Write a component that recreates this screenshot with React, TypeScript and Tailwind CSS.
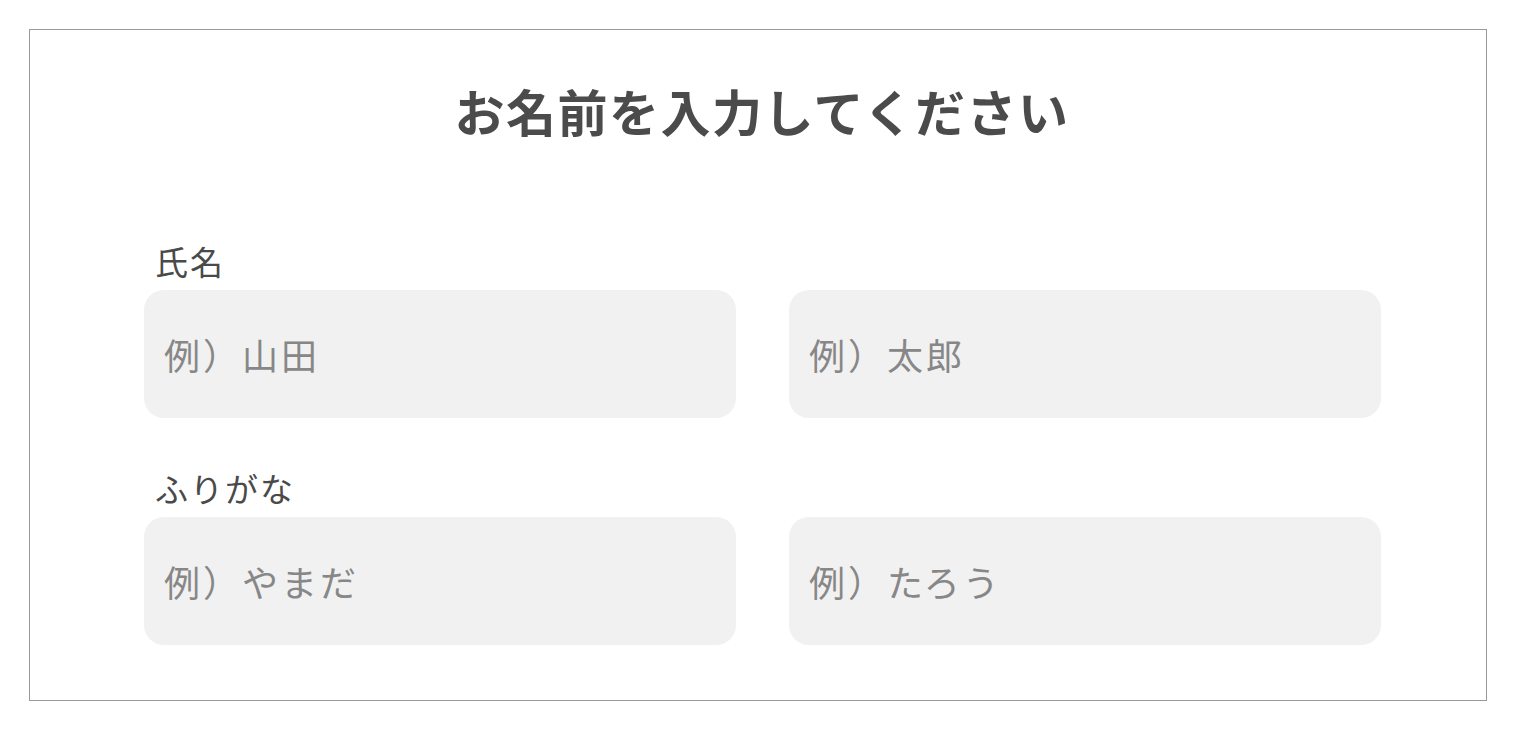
import React from "react";

const FONT = "font-['Noto_Sans_CJK_JP','Noto_Sans',sans-serif]";

const ROWS = [
  { label: "氏名", placeholders: ["例）山田", "例）太郎"] },
  { label: "ふりがな", placeholders: ["例）やまだ", "例）たろう"] },
];

function NameRow({ label, placeholders }: { label: string; placeholders: string[] }) {
  return (
    <div className="flex flex-col">
      <label className="pl-[11px] mb-[12px] text-[33px] leading-[33px] tracking-[2px] text-[#4a4a4a]">{label}</label>
      <div className="grid grid-cols-[592px_592px] gap-x-[53px]">
        {placeholders.map((ph) => (
          <input
            key={ph}
            type="text"
            placeholder={ph}
            className="h-[128px] w-full rounded-[20px] bg-[#f1f1f1] pl-[20px] text-[36px] tracking-[3px] text-[#4a4a4a] outline-none placeholder:text-[#878787]"
          />
        ))}
      </div>
    </div>
  );
}

export default function App() {
  return (
    <div className={`min-h-screen bg-white pt-[29px] ${FONT}`}>
      <div className="mx-[29px] h-[672px] border border-[#999999] bg-white">
        <h1 className="pt-[55px] pl-[8px] text-center text-[50px] leading-[50px] font-bold tracking-[1.5px] text-[#4b4b4b]">
          お名前を入力してください
        </h1>
        <div className="mt-[110px] flex flex-col gap-[54px] pl-[114px]">
          {ROWS.map((row) => (
            <NameRow key={row.label} label={row.label} placeholders={row.placeholders} />
          ))}
        </div>
      </div>
    </div>
  );
}
